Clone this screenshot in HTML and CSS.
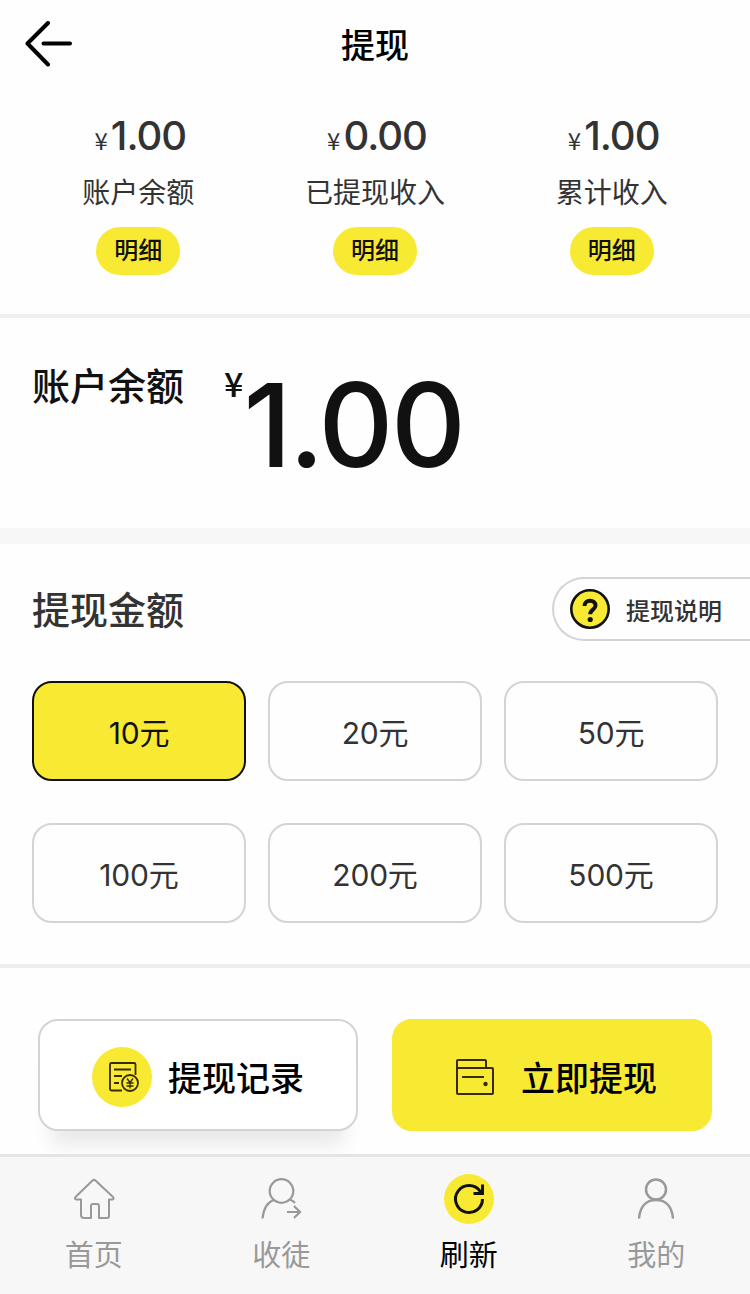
FILE: index.html
```
<!DOCTYPE html>
<html lang="zh-CN">
<head>
    <meta charset="UTF-8">
    <meta name="viewport" content="width=device-width, initial-scale=1.0">
    <title>提现</title>
    <link rel="stylesheet" href="styles.css">
</head>
<body>
    <header class="topbar">
        <a class="back" href="#">
            <svg width="48" height="46" viewBox="0 0 48 46" fill="none" stroke="#000" stroke-width="4" stroke-linecap="round" stroke-linejoin="round">
                <path d="M23 2 2.500 22.500 23 43.500M18.500 22.500h26.500"/>
            </svg>
        </a>
        <h1>提现</h1>
    </header>

    <main>
        <!-- Account summary -->
        <section class="stats">
            <div class="stat">
                <p class="stat-value"><span class="yen">¥</span>1.00</p>
                <p class="stat-label">账户余额</p>
                <a class="detail" href="#">明细</a>
            </div>
            <div class="stat">
                <p class="stat-value"><span class="yen">¥</span>0.00</p>
                <p class="stat-label">已提现收入</p>
                <a class="detail" href="#">明细</a>
            </div>
            <div class="stat">
                <p class="stat-value"><span class="yen">¥</span>1.00</p>
                <p class="stat-label">累计收入</p>
                <a class="detail" href="#">明细</a>
            </div>
        </section>

        <section class="balance">
            <h2>账户余额</h2>
            <span class="balance-yen">¥</span>
            <span class="balance-value">1.00</span>
        </section>

        <!-- Amount picker -->
        <section class="amount">
            <div class="amount-head">
                <h2>提现金额</h2>
                <a class="help" href="#">
                    <svg width="40" height="40" viewBox="0 0 40 40" fill="none">
                        <circle cx="20" cy="20" r="18.7" fill="#f8ea33" stroke="#111" stroke-width="2.6"/>
                        <path d="M14.500 17c0-3.200 2.300-5.200 5.500-5.200s5.500 1.900 5.500 4.800c0 4.200-5.300 4-5.300 8.600" stroke="#111" stroke-width="4"/>
                        <circle cx="20.2" cy="30.500" r="2.600" fill="#111"/>
                    </svg>
                    <span>提现说明</span>
                </a>
            </div>
            <div class="options">
                <button class="option active">10元</button>
                <button class="option">20元</button>
                <button class="option">50元</button>
                <button class="option">100元</button>
                <button class="option">200元</button>
                <button class="option">500元</button>
            </div>
        </section>

        <section class="actions">
            <button class="btn btn-record">
                <svg width="60" height="60" viewBox="0 0 60 60" fill="none" stroke="#3a2a00" stroke-width="1.8" stroke-linejoin="round">
                    <circle cx="30" cy="30" r="30" fill="#f8ea33" stroke="none"/>
                    <path d="M30 43.500H19.500a1.500 1.500 0 0 1-1.500-1.500V17.500a1.500 1.500 0 0 1 1.500-1.500H42a1.500 1.500 0 0 1 1.500 1.500V28M22 22.500h17M22 29h8M22 36h5"/>
                    <circle cx="38" cy="36" r="8"/>
                    <path d="m35 31.500 3 4 3-4M38 35.500v6M34.500 36h7M34.500 39h7" stroke-width="1.3"/>
                </svg>
                <span>提现记录</span>
            </button>
            <button class="btn btn-submit">
                <svg width="40" height="38" viewBox="0 0 40 38" fill="none" stroke="#3a2a00" stroke-width="2" stroke-linejoin="round">
                    <path d="M2 10V3a1 1 0 0 1 1-1h27a1 1 0 0 1 1 1v7M2 10h35a1 1 0 0 1 1 1v24a1 1 0 0 1-1 1H3a1 1 0 0 1-1-1zM7 19h22"/>
                    <circle cx="30.500" cy="26" r="2.200" fill="#3a2a00" stroke="none"/>
                </svg>
                <span>立即提现</span>
            </button>
        </section>
    </main>

    <nav class="tabbar">
        <a class="tab" href="#">
            <svg width="50" height="50" viewBox="0 0 50 50" fill="none" stroke="#999" stroke-width="2" stroke-linejoin="round">
                <path d="M23.500 6.500q1.500-1.200 3 0L44 23q1.500 2-.5 2.500H40V42q0 2-2 2h-8V32q0-2-2-2h-4q-2 0-2 2v12h-7q-3 0-3-3V25.500H7.500Q5 25 6.500 23z"/>
            </svg>
            <span>首页</span>
        </a>
        <a class="tab" href="#">
            <svg width="50" height="50" viewBox="0 0 50 50" fill="none" stroke="#999" stroke-width="2.200">
                <circle cx="25.500" cy="17" r="11.800"/>
                <path d="M6.500 44.500C7.500 35 11 28.500 17.500 26M33.500 25.500q3.500 1 5.500 3.500M31 38h12.500M38 32l6 6-6 6"/>
            </svg>
            <span>收徒</span>
        </a>
        <a class="tab active" href="#">
            <svg width="50" height="50" viewBox="0 0 50 50" fill="none" stroke="#111" stroke-width="3">
                <circle cx="25" cy="25" r="25" fill="#f8ea33" stroke="none"/>
                <path d="M38.500 25A13.500 13.500 0 1 1 36 17.200L38 19M38.500 10.500v9h-9"/>
            </svg>
            <span>刷新</span>
        </a>
        <a class="tab" href="#">
            <svg width="50" height="50" viewBox="0 0 50 50" fill="none" stroke="#999" stroke-width="2.500">
                <circle cx="25" cy="15.500" r="10"/>
                <path d="M8 44.500C9 33 15 26 25 26s16 7 17 18.500"/>
            </svg>
            <span>我的</span>
        </a>
    </nav>
</body>
</html>
```
FILE: styles.css
```
/* Reset and basic styles */
* {
    margin: 0;
    padding: 0;
    box-sizing: border-box;
}

body {
    font-family: Inter, "Noto Sans CJK SC", sans-serif;
    background-color: #fefefe;
    color: #333;
    width: 750px;
    height: 1294px;
    display: flex;
    flex-direction: column;
    overflow: hidden;
}

a {
    color: inherit;
    text-decoration: none;
}

button {
    font-family: inherit;
    color: inherit;
}

svg {
    display: block;
    flex-shrink: 0;
}

main {
    flex: 1;
}

/* Top bar */
.topbar {
    height: 88px;
    display: grid;
    grid-template-columns: 100px 1fr 100px;
    align-items: center;
    color: #000;
}

.back {
    padding-left: 25px;
}

.topbar h1 {
    padding-bottom: 2px;
    font-size: 34px;
    font-weight: 500;
    text-align: center;
}

/* Account summary */
.stats {
    height: 230px;
    padding: 24px 20px 0;
    display: grid;
    grid-template-columns: repeat(3, 1fr);
    border-bottom: 4px solid #eee;
}

.stat {
    display: flex;
    flex-direction: column;
    align-items: center;
}

.stat-value {
    height: 48px;
    padding-left: 4px;
    font-size: 40px;
    font-weight: 500;
    line-height: 48px;
    letter-spacing: -1px;
}

.yen {
    margin-right: 4px;
    font-family: "Noto Sans CJK SC", sans-serif;
    font-size: 24px;
    font-weight: 400;
    line-height: 1;
}

.stat-label {
    margin-top: 13px;
    font-size: 28px;
    line-height: 40px;
}

.detail {
    width: 84px;
    height: 48px;
    margin-top: 14px;
    border-radius: 24px;
    background-color: #f8ea33;
    color: #111;
    font-size: 24px;
    font-weight: 500;
    line-height: 48px;
    text-align: center;
}

/* Balance */
.balance {
    height: 226px;
    padding: 41px 32px 0;
    display: flex;
    align-items: flex-start;
    border-bottom: 16px solid #f7f7f7;
    color: #111;
}

.balance h2 {
    font-size: 38px;
    font-weight: 500;
    line-height: 54px;
}

.balance-yen {
    margin-left: 40px;
    font-family: "Noto Sans CJK SC", sans-serif;
    font-size: 34px;
    font-weight: 500;
    line-height: 48px;
}

.balance-value {
    font-size: 116px;
    font-weight: 500;
    line-height: 132px;
    letter-spacing: -2.5px;
}

/* Amount picker */
.amount {
    height: 424px;
    padding: 33px 32px 0;
    border-bottom: 4px solid #eee;
}

.amount-head {
    display: flex;
    justify-content: space-between;
    align-items: center;
    margin-right: -32px;
}

.amount-head h2 {
    padding-bottom: 3px;
    font-size: 38px;
    font-weight: 500;
}

.help {
    width: 198px;
    height: 64px;
    padding-left: 16px;
    display: flex;
    align-items: center;
    gap: 16px;
    border: 2px solid #d4d4d4;
    border-right: none;
    border-radius: 32px 0 0 32px;
    font-size: 24px;
    font-weight: 500;
}

.options {
    margin-top: 40px;
    display: grid;
    grid-template-columns: repeat(3, 1fr);
    gap: 42px 22px;
}

.option {
    height: 100px;
    padding-bottom: 1px;
    border: 2px solid #d4d4d4;
    border-radius: 20px;
    background: none;
    font-size: 30px;
    letter-spacing: -0.2px;
}

.option.active {
    border-color: #111;
    background-color: #f8ea33;
    color: #111;
}

/* Action buttons */
.actions {
    padding: 51px 38px 0;
    display: grid;
    grid-template-columns: 1fr 1fr;
    gap: 34px;
}

.btn {
    height: 112px;
    padding-top: 3px;
    display: flex;
    justify-content: center;
    align-items: center;
    border: 2px solid #d4d4d4;
    border-radius: 20px;
    color: #000;
    font-size: 34px;
    font-weight: 500;
}

.btn-record {
    gap: 16px;
    background-color: #fff;
    box-shadow: 0 28px 20px -14px rgba(0, 0, 0, 0.09);
}

.btn-submit {
    gap: 26px;
    padding-left: 8px;
    border-color: #f8ea33;
    background-color: #f8ea33;
}

.btn span {
    margin-top: -1px;
}

/* Bottom navigation */
.tabbar {
    height: 140px;
    padding-top: 17px;
    display: grid;
    grid-template-columns: repeat(4, 1fr);
    border-top: 3px solid #e4e4e4;
    background-color: #f7f7f7;
    position: relative;
}

.tab {
    display: flex;
    flex-direction: column;
    align-items: center;
    gap: 12px;
    color: #999;
    font-size: 29px;
    line-height: 40px;
}

.tab.active {
    color: #000;
}
```
